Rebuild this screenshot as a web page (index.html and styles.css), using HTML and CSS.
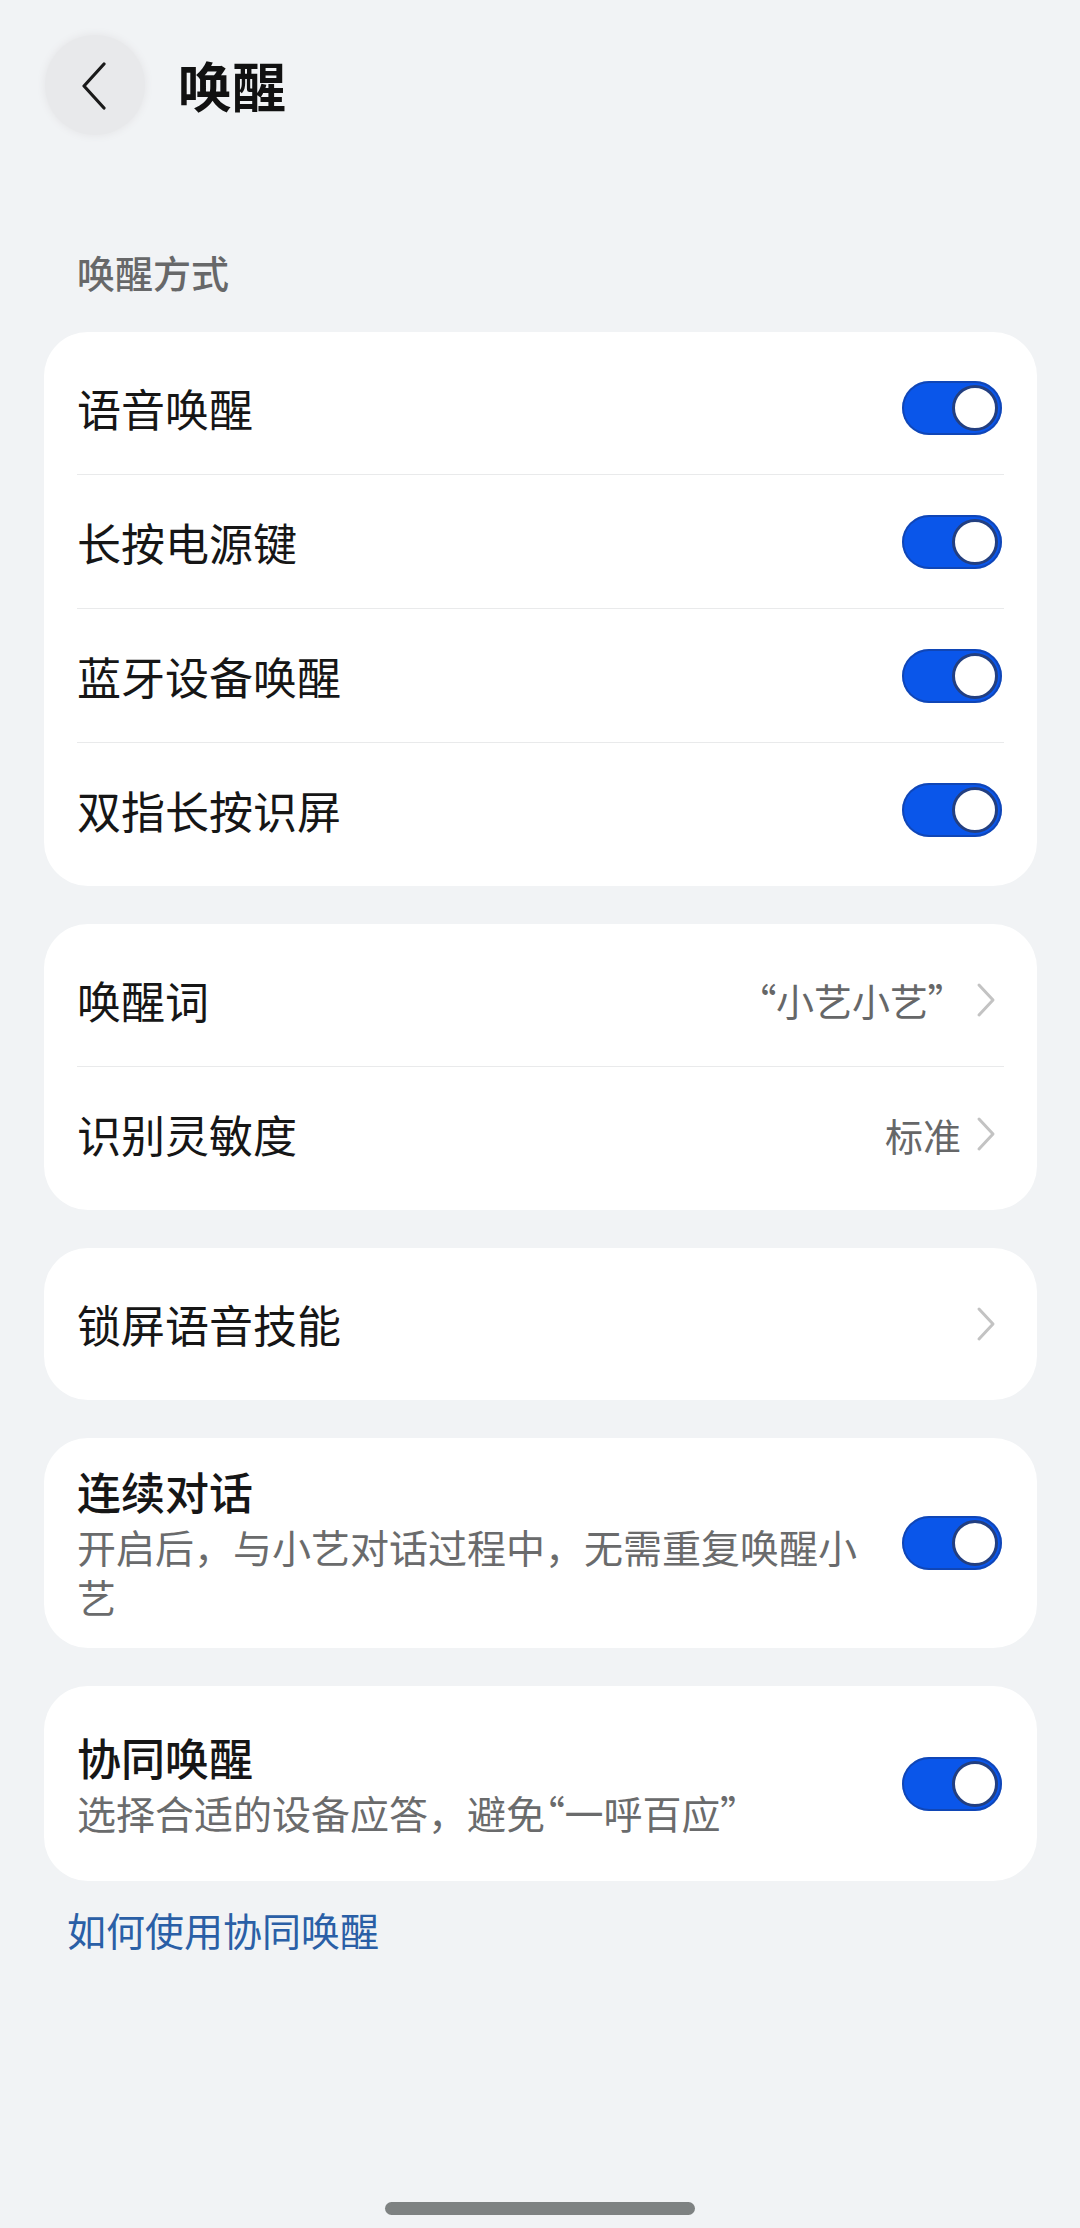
FILE: index.html
```html
<!DOCTYPE html>
<html lang="zh-CN">
<head>
<meta charset="utf-8">
<title>唤醒</title>
<link rel="stylesheet" href="styles.css">
</head>
<body>
<div class="page">
  <header class="header">
    <div class="back">
      <svg width="26" height="48" viewBox="0 0 26 48"><polyline points="23,2 3,24 23,46" fill="none" stroke="#1a1a1a" stroke-width="3.2" stroke-linecap="round" stroke-linejoin="round"/></svg>
    </div>
    <h1 class="title">唤醒</h1>
  </header>

  <div class="section-title">唤醒方式</div>

  <main class="cards">
    <section class="card">
      <div class="row"><span class="label">语音唤醒</span><span class="toggle"><span class="knob"></span></span></div>
      <div class="row"><span class="label">长按电源键</span><span class="toggle"><span class="knob"></span></span></div>
      <div class="row"><span class="label">蓝牙设备唤醒</span><span class="toggle"><span class="knob"></span></span></div>
      <div class="row"><span class="label">双指长按识屏</span><span class="toggle"><span class="knob"></span></span></div>
    </section>

    <section class="card">
      <div class="row"><span class="label">唤醒词</span><span class="value"><span class="q">“</span>小艺小艺<span class="q q-end">”</span><svg class="chev" width="20" height="36" viewBox="0 0 20 36"><polyline points="3,3 17,18 3,33" fill="none" stroke="#c3c3c3" stroke-width="3" stroke-linecap="round" stroke-linejoin="round"/></svg></span></div>
      <div class="row"><span class="label">识别灵敏度</span><span class="value">标准<svg class="chev" width="20" height="36" viewBox="0 0 20 36"><polyline points="3,3 17,18 3,33" fill="none" stroke="#c3c3c3" stroke-width="3" stroke-linecap="round" stroke-linejoin="round"/></svg></span></div>
    </section>

    <section class="card">
      <div class="row"><span class="label">锁屏语音技能</span><span class="value"><svg class="chev" width="20" height="36" viewBox="0 0 20 36"><polyline points="3,3 17,18 3,33" fill="none" stroke="#c3c3c3" stroke-width="3" stroke-linecap="round" stroke-linejoin="round"/></svg></span></div>
    </section>

    <section class="card">
      <div class="row row-tall">
        <div class="text">
          <div class="label label-strong">连续对话</div>
          <div class="sub">开启后，与小艺对话过程中，无需重复唤醒小艺</div>
        </div>
        <span class="toggle"><span class="knob"></span></span>
      </div>
    </section>

    <section class="card">
      <div class="row row-tall">
        <div class="text">
          <div class="label label-strong">协同唤醒</div>
          <div class="sub">选择合适的设备应答，避免<span class="q">“</span>一呼百应<span class="q">”</span></div>
        </div>
        <span class="toggle"><span class="knob"></span></span>
      </div>
    </section>
  </main>

  <a class="link" href="#">如何使用协同唤醒</a>

  <div class="home-bar"></div>
</div>
</body>
</html>
```

FILE: styles.css
```css
html, body {
  margin: 0;
  padding: 0;
  height: 100%;
}

body {
  background: #f1f3f5;
  font-family: "Noto Sans CJK SC", "Noto Sans", sans-serif;
  color: #191919;
}

.page {
  position: relative;
  min-height: 2228px;
}

.header {
  display: flex;
  align-items: center;
  padding: 35px 0 0 45px;
  height: 100px;
}

.back {
  width: 100px;
  height: 100px;
  border-radius: 50%;
  background: #e8e9eb;
  box-shadow: 0 0 6px 2px #e8e9eb;
  display: flex;
  align-items: center;
  justify-content: center;
  padding-right: 2px;
  box-sizing: border-box;
}

.back svg {
  margin-top: 2px;
}

.title {
  margin: 0 0 0 33px;
  font-size: 54px;
  font-weight: 700;
  line-height: 60px;
  color: #111;
}

.section-title {
  margin-top: 113px;
  padding-left: 77px;
  font-size: 38px;
  line-height: 48px;
  font-weight: 500;
  color: #676869;
}

.cards {
  display: flex;
  flex-direction: column;
  gap: 38px;
  padding: 0 43px 0 44px;
  margin-top: 36px;
}

.card {
  background: #ffffff;
  border-radius: 44px;
  padding: 9px 33px;
}

.row {
  display: flex;
  align-items: center;
  justify-content: space-between;
  height: 134px;
  box-sizing: border-box;
  border-bottom: 1.5px solid #e9eaeb;
}

.row:last-child {
  border-bottom: none;
}

.row-tall {
  height: auto;
  min-height: 177px;
  padding: 18px 0;
}

.label {
  font-size: 44px;
  line-height: 52px;
  font-weight: 400;
  color: #161616;
}

.label-strong {
  font-weight: 500;
}

.text {
  flex: 1;
  margin-right: 25px;
}

.sub {
  margin-top: 4px;
  font-size: 39px;
  line-height: 50px;
  color: #6a6b6c;
}

.q {
  font-feature-settings: "palt";
}

.q-end {
  padding-right: 14px;
}

.value {
  display: flex;
  align-items: center;
  font-size: 38px;
  color: #666768;
}

.chev {
  margin-left: 15px;
  margin-right: 8px;
}

.toggle {
  position: relative;
  flex: none;
  width: 100px;
  height: 54px;
  border-radius: 27px;
  background: #0a56ea;
  box-shadow: inset 0 0 0 2px rgba(25, 50, 120, 0.45);
  margin-right: 2px;
}

.knob {
  position: absolute;
  top: 4px;
  right: 4px;
  width: 40px;
  height: 40px;
  border-radius: 50%;
  background: #ffffff;
  border: 3px solid #233f80;
}

.link {
  display: block;
  margin-top: 24px;
  padding-left: 67px;
  font-size: 39px;
  line-height: 48px;
  color: #2a5fa6;
  text-decoration: none;
}

.home-bar {
  position: absolute;
  left: 385px;
  bottom: 13px;
  width: 310px;
  height: 13px;
  border-radius: 7px;
  background: #7e8282;
}
```
